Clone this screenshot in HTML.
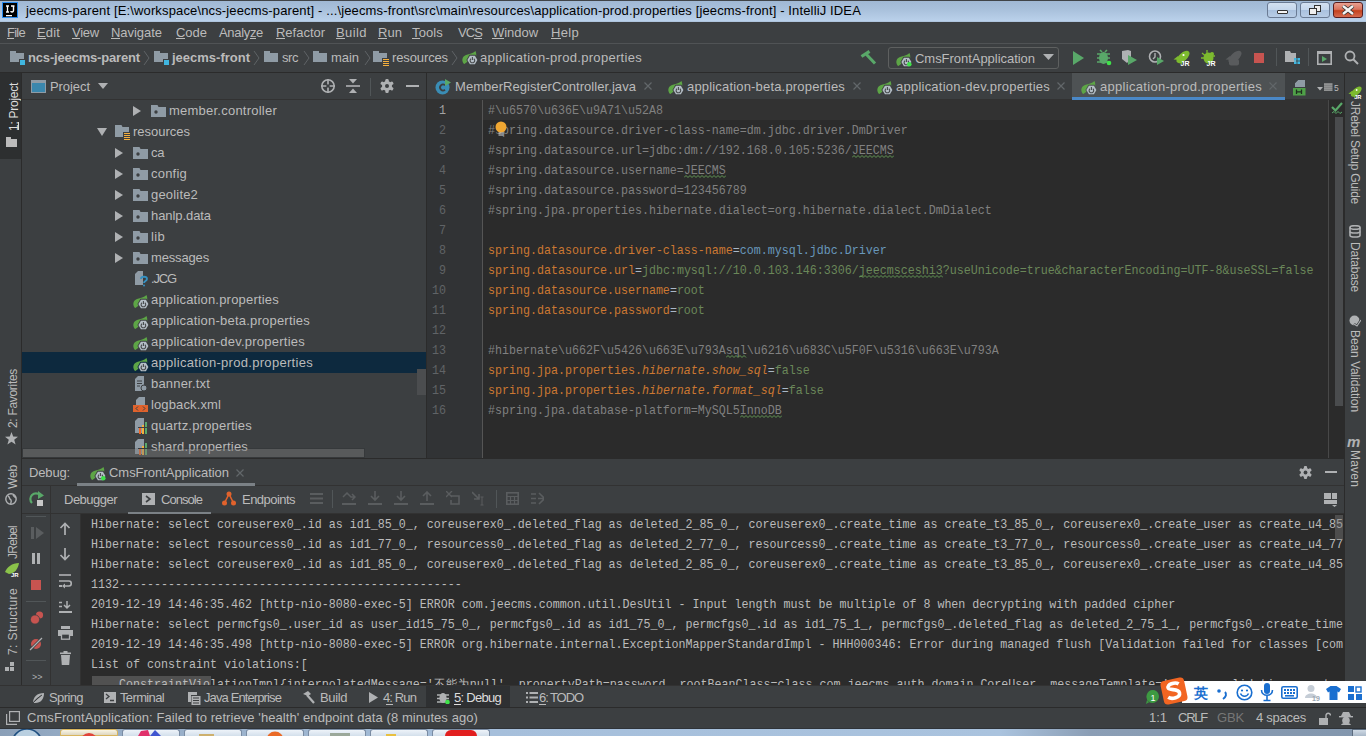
<!DOCTYPE html>
<html><head><meta charset="utf-8">
<style>
*{margin:0;padding:0;box-sizing:border-box}
html,body{width:1366px;height:736px;overflow:hidden;background:#3C3F41;font-family:"Liberation Sans",sans-serif;color:#BBBBBB}
body{position:relative}
.a{position:absolute}
.t{white-space:pre}
.m{position:absolute;transform:scaleY(1.07);transform-origin:0 0;font-family:"Liberation Mono",monospace;font-size:11.67px;line-height:20px;white-space:pre;color:#A9B7C6}
.vl{position:absolute;writing-mode:vertical-rl;white-space:pre;font-size:12px;line-height:14px;color:#BBBBBB}
</style></head><body>
<div class="a" style="left:0px;top:0px;width:1366px;height:22px;background:linear-gradient(#9fb7d3 0%,#a9c1dc 45%,#bcd3ec 100%);"></div>
<div class="a" style="left:0px;top:0px;width:1366px;height:1px;background:#404448;"></div>
<div class="a" style="left:0px;top:21px;width:1366px;height:1px;background:#aec4dd;"></div>
<svg class="a" style="left:2px;top:2px;" width="16" height="16" viewBox="0 0 16 16"><rect x="0.5" y="0.5" width="15" height="15" fill="#000" stroke="#2a8cf0" stroke-width="1"/><path d="M4 4 L7 4 M5.5 4 L5.5 10 M4 10 L7 10" stroke="#fff" stroke-width="1.3"/><path d="M9 4 L12.5 4 M11.5 4 L11.5 8.5 C11.5 10.5 9 10.5 8.8 9" stroke="#fff" stroke-width="1.4" fill="none"/><rect x="4" y="13" width="6" height="1.3" fill="#fff"/></svg>
<div class="a t" style="left:26px;top:0.50px;font-size:13px;line-height:20px;color:#000;font-weight:normal;letter-spacing:0.140px;">jeecms-parent [E:\workspace\ncs-jeecms-parent] - ...\jeecms-front\src\main\resources\application-prod.properties [jeecms-front] - IntelliJ IDEA</div>
<div class="a" style="left:1267px;top:2px;width:30px;height:16px;background:linear-gradient(#d3e1f1 0%,#c4d6ec 50%,#a9c1de 51%,#b8cde6 100%);border:1px solid #6a7b94;border-radius:3px"></div>
<div class="a" style="left:1277px;top:10px;width:11px;height:4px;background:#f4f4f4;border:1px solid #333;border-radius:1px"></div>
<div class="a" style="left:1300px;top:2px;width:30px;height:16px;background:linear-gradient(#d3e1f1 0%,#c4d6ec 50%,#a9c1de 51%,#b8cde6 100%);border:1px solid #6a7b94;border-radius:3px"></div>
<div class="a" style="left:1314px;top:5px;width:7px;height:7px;background:#eee;border:1px solid #333"></div>
<div class="a" style="left:1309px;top:8px;width:8px;height:7px;background:#eee;border:1px solid #333"></div>
<div class="a" style="left:1333px;top:2px;width:30px;height:16px;background:linear-gradient(#e8a091 0%,#d9745f 45%,#c4421e 55%,#d56b50 100%);border:1px solid #5a1e1e;border-radius:3px"></div>
<svg class="a" style="left:1341px;top:5px;" width="14" height="10" viewBox="0 0 14 10"><path d="M2 1 L12 9 M12 1 L2 9" stroke="#333" stroke-width="4"/><path d="M2 1 L12 9 M12 1 L2 9" stroke="#f4f4f4" stroke-width="2.4"/></svg>
<div class="a" style="left:0px;top:22px;width:1366px;height:21px;background:#3C3F41;"></div>
<div class="a t" style="left:7px;top:22.50px;font-size:13px;line-height:20px;color:#BBBBBB;font-weight:normal;letter-spacing:-0.737px;">File</div>
<div class="a" style="left:7px;top:38px;width:7px;height:1px;background:#BBBBBB;"></div>
<div class="a t" style="left:37px;top:22.50px;font-size:13px;line-height:20px;color:#BBBBBB;font-weight:normal;letter-spacing:0.150px;">Edit</div>
<div class="a" style="left:37px;top:38px;width:9px;height:1px;background:#BBBBBB;"></div>
<div class="a t" style="left:72px;top:22.50px;font-size:13px;line-height:20px;color:#BBBBBB;font-weight:normal;letter-spacing:-0.236px;">View</div>
<div class="a" style="left:72px;top:38px;width:8px;height:1px;background:#BBBBBB;"></div>
<div class="a t" style="left:111px;top:22.50px;font-size:13px;line-height:20px;color:#BBBBBB;font-weight:normal;letter-spacing:-0.039px;">Navigate</div>
<div class="a" style="left:111px;top:38px;width:9px;height:1px;background:#BBBBBB;"></div>
<div class="a t" style="left:176px;top:22.50px;font-size:13px;line-height:20px;color:#BBBBBB;font-weight:normal;letter-spacing:-0.020px;">Code</div>
<div class="a" style="left:176px;top:38px;width:9px;height:1px;background:#BBBBBB;"></div>
<div class="a t" style="left:219px;top:22.50px;font-size:13px;line-height:20px;color:#BBBBBB;font-weight:normal;letter-spacing:-0.322px;">Analyze</div>
<div class="a" style="left:250px;top:38px;width:6px;height:1px;background:#BBBBBB;"></div>
<div class="a t" style="left:276px;top:22.50px;font-size:13px;line-height:20px;color:#BBBBBB;font-weight:normal;letter-spacing:-0.016px;">Refactor</div>
<div class="a" style="left:276px;top:38px;width:9px;height:1px;background:#BBBBBB;"></div>
<div class="a t" style="left:336px;top:22.50px;font-size:13px;line-height:20px;color:#BBBBBB;font-weight:normal;letter-spacing:0.418px;">Build</div>
<div class="a" style="left:336px;top:38px;width:9px;height:1px;background:#BBBBBB;"></div>
<div class="a t" style="left:378px;top:22.50px;font-size:13px;line-height:20px;color:#BBBBBB;font-weight:normal;letter-spacing:0.050px;">Run</div>
<div class="a" style="left:378px;top:38px;width:9px;height:1px;background:#BBBBBB;"></div>
<div class="a t" style="left:412px;top:22.50px;font-size:13px;line-height:20px;color:#BBBBBB;font-weight:normal;letter-spacing:0.130px;">Tools</div>
<div class="a" style="left:412px;top:38px;width:8px;height:1px;background:#BBBBBB;"></div>
<div class="a t" style="left:458px;top:22.50px;font-size:13px;line-height:20px;color:#BBBBBB;font-weight:normal;letter-spacing:-0.910px;">VCS</div>
<div class="a" style="left:474px;top:38px;width:8px;height:1px;background:#BBBBBB;"></div>
<div class="a t" style="left:492px;top:22.50px;font-size:13px;line-height:20px;color:#BBBBBB;font-weight:normal;letter-spacing:-0.040px;">Window</div>
<div class="a" style="left:492px;top:38px;width:12px;height:1px;background:#BBBBBB;"></div>
<div class="a t" style="left:551px;top:22.50px;font-size:13px;line-height:20px;color:#BBBBBB;font-weight:normal;letter-spacing:0.316px;">Help</div>
<div class="a" style="left:551px;top:38px;width:10px;height:1px;background:#BBBBBB;"></div>
<div class="a" style="left:0px;top:43px;width:1366px;height:1px;background:#505355;"></div>
<div class="a" style="left:0px;top:44px;width:1366px;height:28px;background:#3C3F41;"></div>
<div class="a" style="left:10px;top:53px;width:14px;height:9px;background:#8F9BA5;"></div>
<div class="a" style="left:10px;top:51px;width:6px;height:3px;background:#8F9BA5;"></div>
<div class="a" style="left:19px;top:59px;width:7px;height:7px;background:#40B6E0;border:1px solid #3C3F41"></div>
<div class="a t" style="left:28px;top:47.50px;font-size:13px;line-height:20px;color:#BBBBBB;font-weight:bold;letter-spacing:-0.170px;">ncs-jeecms-parent</div>
<svg class="a" style="left:143px;top:50px;" width="7" height="16" viewBox="0 0 7 16"><path d="M1 1 L6 8 L1 15" stroke="#5f6366" fill="none" stroke-width="1"/></svg>
<div class="a" style="left:154px;top:53px;width:14px;height:9px;background:#8F9BA5;"></div>
<div class="a" style="left:154px;top:51px;width:6px;height:3px;background:#8F9BA5;"></div>
<div class="a" style="left:163px;top:59px;width:7px;height:7px;background:#40B6E0;border:1px solid #3C3F41"></div>
<div class="a t" style="left:172px;top:47.50px;font-size:13px;line-height:20px;color:#BBBBBB;font-weight:bold;letter-spacing:-0.002px;">jeecms-front</div>
<svg class="a" style="left:253px;top:50px;" width="7" height="16" viewBox="0 0 7 16"><path d="M1 1 L6 8 L1 15" stroke="#5f6366" fill="none" stroke-width="1"/></svg>
<div class="a" style="left:264px;top:53px;width:14px;height:9px;background:#8F9BA5;"></div>
<div class="a" style="left:264px;top:51px;width:6px;height:3px;background:#8F9BA5;"></div>
<div class="a t" style="left:282px;top:47.50px;font-size:13px;line-height:20px;color:#BBBBBB;font-weight:normal;letter-spacing:-0.443px;">src</div>
<svg class="a" style="left:303px;top:50px;" width="7" height="16" viewBox="0 0 7 16"><path d="M1 1 L6 8 L1 15" stroke="#5f6366" fill="none" stroke-width="1"/></svg>
<div class="a" style="left:313px;top:53px;width:14px;height:9px;background:#8F9BA5;"></div>
<div class="a" style="left:313px;top:51px;width:6px;height:3px;background:#8F9BA5;"></div>
<div class="a t" style="left:331px;top:47.50px;font-size:13px;line-height:20px;color:#BBBBBB;font-weight:normal;letter-spacing:-0.045px;">main</div>
<svg class="a" style="left:364px;top:50px;" width="7" height="16" viewBox="0 0 7 16"><path d="M1 1 L6 8 L1 15" stroke="#5f6366" fill="none" stroke-width="1"/></svg>
<div class="a" style="left:373px;top:53px;width:14px;height:9px;background:#8F9BA5;"></div>
<div class="a" style="left:373px;top:51px;width:6px;height:3px;background:#8F9BA5;"></div>
<div class="a" style="left:382px;top:58px;width:7px;height:8px;background:#3C3F41;"></div>
<div class="a" style="left:383px;top:59px;width:6px;height:1px;background:#F4AF3D;"></div>
<div class="a" style="left:383px;top:61px;width:6px;height:1px;background:#F4AF3D;"></div>
<div class="a" style="left:383px;top:63px;width:6px;height:1px;background:#F4AF3D;"></div>
<div class="a" style="left:383px;top:65px;width:6px;height:1px;background:#F4AF3D;"></div>
<div class="a t" style="left:392px;top:47.50px;font-size:13px;line-height:20px;color:#BBBBBB;font-weight:normal;letter-spacing:-0.120px;">resources</div>
<svg class="a" style="left:451px;top:50px;" width="7" height="16" viewBox="0 0 7 16"><path d="M1 1 L6 8 L1 15" stroke="#5f6366" fill="none" stroke-width="1"/></svg>
<svg class="a" style="left:461px;top:48px;" width="18" height="18" viewBox="0 0 18 18"><path d="M2.5 15.5 C0.5 12.5 1 8.5 5 7 C8.5 5.8 12 5.5 14.5 3 C15.8 6 15.5 9.5 13.5 11.5 L9 12.5 C7 13.2 5 14.5 3.5 16 Z" fill="#5DA546"/><polygon points="17.40,12.00 14.40,17.20 8.40,17.20 5.40,12.00 8.40,6.80 14.40,6.80" fill="#3C3F41"/><polygon points="16.40,12.00 13.90,16.33 8.90,16.33 6.40,12.00 8.90,7.67 13.90,7.67" fill="#B4BEC6"/><path d="M10.0 10.7 A2.3 2.3 0 1 0 12.8 10.7" stroke="#46494B" stroke-width="1.1" fill="none"/><path d="M11.4 9.0 L11.4 12.0" stroke="#46494B" stroke-width="1.1"/></svg>
<div class="a t" style="left:480px;top:47.50px;font-size:13px;line-height:20px;color:#BBBBBB;font-weight:normal;letter-spacing:0.299px;">application-prod.properties</div>
<svg class="a" style="left:860px;top:49px;" width="17" height="17" viewBox="0 0 17 17"><path d="M1.5 7.5 L9.5 2.3" stroke="#59A869" stroke-width="3.2"/><path d="M6.5 5.5 L15 14.5" stroke="#59A869" stroke-width="3"/></svg>
<div class="a" style="left:888px;top:47px;width:171px;height:22px;background:transparent;border:1px solid #5E6060;border-radius:3px"></div>
<svg class="a" style="left:895px;top:50px;" width="18" height="18" viewBox="0 0 18 18"><path d="M2.5 15.5 C0.5 12.5 1 8.5 5 7 C8.5 5.8 12 5.5 14.5 3 C15.8 6 15.5 9.5 13.5 11.5 L9 12.5 C7 13.2 5 14.5 3.5 16 Z" fill="#5DA546"/><polygon points="17.40,12.00 14.40,17.20 8.40,17.20 5.40,12.00 8.40,6.80 14.40,6.80" fill="#3C3F41"/><polygon points="16.40,12.00 13.90,16.33 8.90,16.33 6.40,12.00 8.90,7.67 13.90,7.67" fill="#B4BEC6"/><path d="M10.0 10.7 A2.3 2.3 0 1 0 12.8 10.7" stroke="#46494B" stroke-width="1.1" fill="none"/><path d="M11.4 9.0 L11.4 12.0" stroke="#46494B" stroke-width="1.1"/><circle cx="14.3" cy="14.3" r="2.3" fill="#3fe24a"/></svg>
<div class="a t" style="left:915px;top:48.50px;font-size:13px;line-height:20px;color:#BBBBBB;font-weight:normal;letter-spacing:-0.035px;">CmsFrontApplication</div>
<svg class="a" style="left:1043px;top:54px;" width="11" height="7" viewBox="0 0 11 7"><polygon points="0,0 11,0 5.5,6" fill="#AFB1B3"/></svg>
<svg class="a" style="left:1072px;top:51px;" width="12" height="14" viewBox="0 0 12 14"><polygon points="1,0 12,7 1,14" fill="#59A869"/></svg>
<svg class="a" style="left:1096px;top:49px;" width="16" height="17" viewBox="0 0 16 17"><ellipse cx="7.5" cy="9" rx="4.5" ry="6" fill="#59A869"/><path d="M1 5 L14 5 M1 9 L14 9 M1 13 L14 13 M4 1 L6 3 M11 1 L9 3" stroke="#59A869" stroke-width="1.6"/><circle cx="13" cy="14" r="2.3" fill="#3fe24a"/></svg>
<svg class="a" style="left:1121px;top:49px;" width="17" height="17" viewBox="0 0 17 17"><path d="M1 2 L7 1 L10 2 L10 10 L6 14 L1 10 Z" fill="#AFB1B3"/><polygon points="7,6 16,11 7,16" fill="#59A869"/></svg>
<svg class="a" style="left:1148px;top:49px;" width="17" height="17" viewBox="0 0 17 17"><circle cx="7" cy="7.5" r="5.5" fill="none" stroke="#AFB1B3" stroke-width="1.6"/><path d="M7 4 L7 8 L5 10" stroke="#AFB1B3" stroke-width="1.4" fill="none"/><polygon points="9,8 16,12 9,16" fill="#59A869"/></svg>
<svg class="a" style="left:1173px;top:49px;" width="17" height="18" viewBox="0 0 17 18"><ellipse cx="10" cy="8" rx="8" ry="4" transform="rotate(-42 10 8)" fill="#7DBB2F"/><path d="M0.5 10.5 L5 7 L7 11 Z" fill="#7DBB2F"/><path d="M6 11 L8 16 L10.5 12 Z" fill="#7DBB2F"/><circle cx="10.5" cy="6" r="1.1" fill="#fff"/><text x="7.5" y="17" font-size="7" font-family="Liberation Sans" font-weight="bold" fill="#fff">JR</text></svg>
<svg class="a" style="left:1199px;top:49px;" width="18" height="18" viewBox="0 0 18 18"><path d="M2 9 L6 9 M3 4 L6.5 7 M8 1 L8 5 M12 7 L16 7" stroke="#7DBB2F" stroke-width="1.3"/><ellipse cx="9.5" cy="9" rx="5" ry="5.5" fill="#7DBB2F"/><circle cx="13" cy="5" r="2" fill="#7DBB2F"/><text x="7.5" y="17" font-size="7" font-family="Liberation Sans" font-weight="bold" fill="#fff">JR</text></svg>
<svg class="a" style="left:1225px;top:49px;" width="17" height="17" viewBox="0 0 17 17"><ellipse cx="10" cy="8" rx="8" ry="4" transform="rotate(-42 10 8)" fill="#595B5D"/><path d="M0.5 10.5 L5 7 L7 11 Z" fill="#595B5D"/><path d="M6 11 L8 16 L10.5 12 Z" fill="#595B5D"/><rect x="4" y="10" width="10" height="6.5" rx="2" fill="#595B5D"/></svg>
<div class="a" style="left:1254px;top:53px;width:10px;height:10px;background:#C75450;"></div>
<div class="a" style="left:1276px;top:48px;width:1px;height:18px;background:#515658;"></div>
<svg class="a" style="left:1284px;top:49px;" width="16" height="16" viewBox="0 0 16 16"><path d="M1 2 L6 2 L7 4 L12 4 L12 13 L1 13 Z" fill="#AFB1B3"/><rect x="10" y="9" width="2.6" height="2.6" fill="#40B6E0"/><rect x="13.4" y="9" width="2.6" height="2.6" fill="#40B6E0"/><rect x="10" y="12.4" width="2.6" height="2.6" fill="#40B6E0"/><rect x="13.4" y="12.4" width="2.6" height="2.6" fill="#40B6E0"/></svg>
<div class="a" style="left:1308px;top:48px;width:1px;height:18px;background:#515658;"></div>
<svg class="a" style="left:1317px;top:51px;" width="15" height="14" viewBox="0 0 15 14"><rect x="0.8" y="0.8" width="13.4" height="12.4" fill="none" stroke="#AFB1B3" stroke-width="1.6"/><rect x="1" y="1" width="13" height="2" fill="#AFB1B3"/><polygon points="5,5 10,8 5,11" fill="#59A869"/></svg>
<svg class="a" style="left:1344px;top:50px;" width="15" height="15" viewBox="0 0 15 15"><circle cx="6" cy="6" r="4.5" fill="none" stroke="#AFB1B3" stroke-width="1.8"/><path d="M9 9 L14 14" stroke="#AFB1B3" stroke-width="2"/></svg>
<div class="a" style="left:0px;top:72px;width:1366px;height:1px;background:#2B2B2B;"></div>
<div class="a" style="left:0px;top:73px;width:21px;height:612px;background:#3C3F41;"></div>
<div class="a" style="left:21px;top:73px;width:1px;height:612px;background:#2B2B2B;"></div>
<div class="a" style="left:0px;top:73px;width:21px;height:86px;background:#2D2F30;"></div>
<div class="vl" style="left:7px;top:83px;height:52px;font-size:12px;letter-spacing:-0.269px;color:#DDDDDD;transform:rotate(180deg);transform-origin:7px 24.0px">1: Project</div>
<div class="a" style="left:18px;top:122px;width:1px;height:8px;background:#DDDDDD;"></div>
<div class="a" style="left:6px;top:139px;width:11px;height:8px;background:#BBBBBB;"></div>
<div class="a" style="left:6px;top:137px;width:5px;height:3px;background:#BBBBBB;"></div>
<div class="vl" style="left:6px;top:369px;height:63px;font-size:12px;letter-spacing:-0.308px;color:#BBBBBB;transform:rotate(180deg);transform-origin:7px 29.5px">2: Favorites</div>
<svg class="a" style="left:5px;top:432px;" width="13" height="13" viewBox="0 0 13 13"><polygon points="6.5,0 8.2,4.6 13,4.8 9.2,7.8 10.6,12.6 6.5,9.8 2.4,12.6 3.8,7.8 0,4.8 4.8,4.6" fill="#AFB1B3"/></svg>
<div class="vl" style="left:6px;top:465px;height:28px;font-size:12px;letter-spacing:-0.152px;color:#BBBBBB;transform:rotate(180deg);transform-origin:7px 12.0px">Web</div>
<svg class="a" style="left:5px;top:493px;" width="12" height="12" viewBox="0 0 12 12"><circle cx="6" cy="6" r="5.2" fill="none" stroke="#AFB1B3" stroke-width="1.4"/><path d="M3 3 C5 4 4 6 6 7 C7 9 5 10 6 11 M8 2 C9 4 10 4 11 5" stroke="#AFB1B3" stroke-width="1.4" fill="none"/></svg>
<div class="vl" style="left:6px;top:526px;height:37px;font-size:12px;letter-spacing:-0.726px;color:#BBBBBB;transform:rotate(180deg);transform-origin:7px 16.5px">JRebel</div>
<svg class="a" style="left:4px;top:562px;" width="16" height="15" viewBox="0 0 16 15"><path d="M1 10 C3 5 8 1 15 1 C14 7 11 11 5 12 Z" fill="#8BC34A"/><text x="7" y="15" font-size="6" font-family="Liberation Sans" font-weight="bold" fill="#fff">JR</text></svg>
<div class="vl" style="left:6px;top:588px;height:71px;font-size:12px;letter-spacing:0.414px;color:#BBBBBB;transform:rotate(180deg);transform-origin:7px 33.5px">7: Structure</div>
<div class="a" style="left:5px;top:667px;width:4px;height:4px;background:#AFB1B3;"></div>
<div class="a" style="left:10px;top:667px;width:4px;height:4px;background:#AFB1B3;"></div>
<div class="a" style="left:10px;top:662px;width:4px;height:4px;background:#AFB1B3;"></div>
<div class="a" style="left:22px;top:73px;width:404px;height:26px;background:#3C3F41;"></div>
<div class="a" style="left:31px;top:80px;width:15px;height:13px;background:#3A87AD;border:1.5px solid #8F9BA5;border-top-width:3px"></div>
<div class="a t" style="left:50px;top:76.50px;font-size:13px;line-height:20px;color:#BBBBBB;font-weight:normal;letter-spacing:-0.066px;">Project</div>
<svg class="a" style="left:98px;top:83px;" width="10" height="6" viewBox="0 0 10 6"><polygon points="0,0 10,0 5,6" fill="#AFB1B3"/></svg>
<svg class="a" style="left:320px;top:78px;" width="16" height="16" viewBox="0 0 16 16"><circle cx="8" cy="8" r="6.2" fill="none" stroke="#AFB1B3" stroke-width="1.6"/><path d="M8 1 L8 15 M1 8 L15 8" stroke="#AFB1B3" stroke-width="1.6"/><circle cx="8" cy="8" r="1.8" fill="#3C3F41"/></svg>
<svg class="a" style="left:346px;top:79px;" width="14" height="14" viewBox="0 0 14 14"><path d="M0 7 L14 7" stroke="#AFB1B3" stroke-width="1.6"/><polygon points="3,0 11,0 7,4.5" fill="#AFB1B3"/><polygon points="3,14 11,14 7,9.5" fill="#AFB1B3"/></svg>
<div class="a" style="left:370px;top:78px;width:1px;height:18px;background:#515658;"></div>
<svg class="a" style="left:380px;top:79px;" width="14" height="14" viewBox="0 0 14 14"><g fill="#AFB1B3"><circle cx="7" cy="7" r="5"/><g id="t"><rect x="5.3" y="0" width="3.4" height="14" rx="1.2"/></g><rect x="5.3" y="0" width="3.4" height="14" rx="1.2" transform="rotate(60 7 7)"/><rect x="5.3" y="0" width="3.4" height="14" rx="1.2" transform="rotate(-60 7 7)"/></g><circle cx="7" cy="7" r="2" fill="#3C3F41"/></svg>
<div class="a" style="left:406px;top:85px;width:13px;height:2px;background:#AFB1B3;"></div>
<div class="a" style="left:22px;top:99px;width:404px;height:1px;background:#323232;"></div>
<div class="a" style="left:22px;top:352px;width:404px;height:21px;background:#0D293E;"></div>
<svg class="a" style="left:133px;top:106px;" width="9" height="10" viewBox="0 0 9 10"><polygon points="0,0 8,5 0,10" fill="#AFB1B3"/></svg>
<svg class="a" style="left:151px;top:105px;" width="15" height="12" viewBox="0 0 15 12"><path d="M0 0 L6.5 0 L7.5 2 L15 2 L15 12 L0 12 Z" fill="#8F9BA5"/><circle cx="5" cy="7" r="1.7" fill="#3C3F41"/></svg>
<div class="a t" style="left:169px;top:100.50px;font-size:13px;line-height:20px;color:#BBBBBB;font-weight:normal;letter-spacing:0.233px;">member.controller</div>
<svg class="a" style="left:97px;top:128px;" width="10" height="9" viewBox="0 0 10 9"><polygon points="0,0 10,0 5,8" fill="#AFB1B3"/></svg>
<svg class="a" style="left:115px;top:125px;" width="16" height="15" viewBox="0 0 16 15"><path d="M0 0 L6.5 0 L7.5 2 L14 2 L14 12 L0 12 Z" fill="#8F9BA5"/><rect x="8" y="7" width="8" height="8" fill="#3C3F41"/><g fill="#F4AF3D"><rect x="9" y="8" width="6" height="1"/><rect x="9" y="10" width="6" height="1"/><rect x="9" y="12" width="6" height="1"/><rect x="9" y="14" width="6" height="1"/></g></svg>
<div class="a t" style="left:133px;top:121.50px;font-size:13px;line-height:20px;color:#BBBBBB;font-weight:normal;letter-spacing:-0.009px;">resources</div>
<svg class="a" style="left:115px;top:148px;" width="9" height="10" viewBox="0 0 9 10"><polygon points="0,0 8,5 0,10" fill="#AFB1B3"/></svg>
<svg class="a" style="left:133px;top:147px;" width="15" height="12" viewBox="0 0 15 12"><path d="M0 0 L6.5 0 L7.5 2 L15 2 L15 12 L0 12 Z" fill="#8F9BA5"/><circle cx="5" cy="7" r="1.7" fill="#3C3F41"/></svg>
<div class="a t" style="left:151px;top:142.50px;font-size:13px;line-height:20px;color:#BBBBBB;font-weight:normal;letter-spacing:-0.365px;">ca</div>
<svg class="a" style="left:115px;top:169px;" width="9" height="10" viewBox="0 0 9 10"><polygon points="0,0 8,5 0,10" fill="#AFB1B3"/></svg>
<svg class="a" style="left:133px;top:168px;" width="15" height="12" viewBox="0 0 15 12"><path d="M0 0 L6.5 0 L7.5 2 L15 2 L15 12 L0 12 Z" fill="#8F9BA5"/><circle cx="5" cy="7" r="1.7" fill="#3C3F41"/></svg>
<div class="a t" style="left:151px;top:163.50px;font-size:13px;line-height:20px;color:#BBBBBB;font-weight:normal;letter-spacing:0.218px;">config</div>
<svg class="a" style="left:115px;top:190px;" width="9" height="10" viewBox="0 0 9 10"><polygon points="0,0 8,5 0,10" fill="#AFB1B3"/></svg>
<svg class="a" style="left:133px;top:189px;" width="15" height="12" viewBox="0 0 15 12"><path d="M0 0 L6.5 0 L7.5 2 L15 2 L15 12 L0 12 Z" fill="#8F9BA5"/><circle cx="5" cy="7" r="1.7" fill="#3C3F41"/></svg>
<div class="a t" style="left:151px;top:184.50px;font-size:13px;line-height:20px;color:#BBBBBB;font-weight:normal;letter-spacing:0.183px;">geolite2</div>
<svg class="a" style="left:115px;top:211px;" width="9" height="10" viewBox="0 0 9 10"><polygon points="0,0 8,5 0,10" fill="#AFB1B3"/></svg>
<svg class="a" style="left:133px;top:210px;" width="15" height="12" viewBox="0 0 15 12"><path d="M0 0 L6.5 0 L7.5 2 L15 2 L15 12 L0 12 Z" fill="#8F9BA5"/><circle cx="5" cy="7" r="1.7" fill="#3C3F41"/></svg>
<div class="a t" style="left:151px;top:205.50px;font-size:13px;line-height:20px;color:#BBBBBB;font-weight:normal;letter-spacing:-0.072px;">hanlp.data</div>
<svg class="a" style="left:115px;top:232px;" width="9" height="10" viewBox="0 0 9 10"><polygon points="0,0 8,5 0,10" fill="#AFB1B3"/></svg>
<svg class="a" style="left:133px;top:231px;" width="15" height="12" viewBox="0 0 15 12"><path d="M0 0 L6.5 0 L7.5 2 L15 2 L15 12 L0 12 Z" fill="#8F9BA5"/><circle cx="5" cy="7" r="1.7" fill="#3C3F41"/></svg>
<div class="a t" style="left:151px;top:226.50px;font-size:13px;line-height:20px;color:#BBBBBB;font-weight:normal;letter-spacing:0.331px;">lib</div>
<svg class="a" style="left:115px;top:253px;" width="9" height="10" viewBox="0 0 9 10"><polygon points="0,0 8,5 0,10" fill="#AFB1B3"/></svg>
<svg class="a" style="left:133px;top:252px;" width="15" height="12" viewBox="0 0 15 12"><path d="M0 0 L6.5 0 L7.5 2 L15 2 L15 12 L0 12 Z" fill="#8F9BA5"/><circle cx="5" cy="7" r="1.7" fill="#3C3F41"/></svg>
<div class="a t" style="left:151px;top:247.50px;font-size:13px;line-height:20px;color:#BBBBBB;font-weight:normal;letter-spacing:-0.156px;">messages</div>
<svg class="a" style="left:134px;top:271px;" width="15" height="16" viewBox="0 0 15 16"><path d="M1 3 L4 0 L9 0 L9 14 L1 14 Z" fill="#8F9BA5"/><path d="M7 8 C7 5 13 5 13 8 C13 10 10 10 10 12" stroke="#3592C4" stroke-width="1.8" fill="none"/><circle cx="10" cy="14.6" r="1" fill="#3592C4"/></svg>
<div class="a t" style="left:151px;top:268.50px;font-size:13px;line-height:20px;color:#BBBBBB;font-weight:normal;letter-spacing:-1.153px;">.JCG</div>
<svg class="a" style="left:132px;top:292px;" width="18" height="18" viewBox="0 0 18 18"><path d="M2.5 15.5 C0.5 12.5 1 8.5 5 7 C8.5 5.8 12 5.5 14.5 3 C15.8 6 15.5 9.5 13.5 11.5 L9 12.5 C7 13.2 5 14.5 3.5 16 Z" fill="#5DA546"/><polygon points="17.40,12.00 14.40,17.20 8.40,17.20 5.40,12.00 8.40,6.80 14.40,6.80" fill="#3C3F41"/><polygon points="16.40,12.00 13.90,16.33 8.90,16.33 6.40,12.00 8.90,7.67 13.90,7.67" fill="#B4BEC6"/><path d="M10.0 10.7 A2.3 2.3 0 1 0 12.8 10.7" stroke="#46494B" stroke-width="1.1" fill="none"/><path d="M11.4 9.0 L11.4 12.0" stroke="#46494B" stroke-width="1.1"/></svg>
<div class="a t" style="left:151px;top:289.50px;font-size:13px;line-height:20px;color:#BBBBBB;font-weight:normal;letter-spacing:0.201px;">application.properties</div>
<svg class="a" style="left:132px;top:313px;" width="18" height="18" viewBox="0 0 18 18"><path d="M2.5 15.5 C0.5 12.5 1 8.5 5 7 C8.5 5.8 12 5.5 14.5 3 C15.8 6 15.5 9.5 13.5 11.5 L9 12.5 C7 13.2 5 14.5 3.5 16 Z" fill="#5DA546"/><polygon points="17.40,12.00 14.40,17.20 8.40,17.20 5.40,12.00 8.40,6.80 14.40,6.80" fill="#3C3F41"/><polygon points="16.40,12.00 13.90,16.33 8.90,16.33 6.40,12.00 8.90,7.67 13.90,7.67" fill="#B4BEC6"/><path d="M10.0 10.7 A2.3 2.3 0 1 0 12.8 10.7" stroke="#46494B" stroke-width="1.1" fill="none"/><path d="M11.4 9.0 L11.4 12.0" stroke="#46494B" stroke-width="1.1"/></svg>
<div class="a t" style="left:151px;top:310.50px;font-size:13px;line-height:20px;color:#BBBBBB;font-weight:normal;letter-spacing:0.214px;">application-beta.properties</div>
<svg class="a" style="left:132px;top:334px;" width="18" height="18" viewBox="0 0 18 18"><path d="M2.5 15.5 C0.5 12.5 1 8.5 5 7 C8.5 5.8 12 5.5 14.5 3 C15.8 6 15.5 9.5 13.5 11.5 L9 12.5 C7 13.2 5 14.5 3.5 16 Z" fill="#5DA546"/><polygon points="17.40,12.00 14.40,17.20 8.40,17.20 5.40,12.00 8.40,6.80 14.40,6.80" fill="#3C3F41"/><polygon points="16.40,12.00 13.90,16.33 8.90,16.33 6.40,12.00 8.90,7.67 13.90,7.67" fill="#B4BEC6"/><path d="M10.0 10.7 A2.3 2.3 0 1 0 12.8 10.7" stroke="#46494B" stroke-width="1.1" fill="none"/><path d="M11.4 9.0 L11.4 12.0" stroke="#46494B" stroke-width="1.1"/></svg>
<div class="a t" style="left:151px;top:331.50px;font-size:13px;line-height:20px;color:#BBBBBB;font-weight:normal;letter-spacing:0.234px;">application-dev.properties</div>
<svg class="a" style="left:132px;top:355px;" width="18" height="18" viewBox="0 0 18 18"><path d="M2.5 15.5 C0.5 12.5 1 8.5 5 7 C8.5 5.8 12 5.5 14.5 3 C15.8 6 15.5 9.5 13.5 11.5 L9 12.5 C7 13.2 5 14.5 3.5 16 Z" fill="#5DA546"/><polygon points="17.40,12.00 14.40,17.20 8.40,17.20 5.40,12.00 8.40,6.80 14.40,6.80" fill="#0D293E"/><polygon points="16.40,12.00 13.90,16.33 8.90,16.33 6.40,12.00 8.90,7.67 13.90,7.67" fill="#B4BEC6"/><path d="M10.0 10.7 A2.3 2.3 0 1 0 12.8 10.7" stroke="#46494B" stroke-width="1.1" fill="none"/><path d="M11.4 9.0 L11.4 12.0" stroke="#46494B" stroke-width="1.1"/></svg>
<div class="a t" style="left:151px;top:352.50px;font-size:13px;line-height:20px;color:#BBBBBB;font-weight:normal;letter-spacing:0.299px;">application-prod.properties</div>
<svg class="a" style="left:134px;top:376px;" width="15" height="16" viewBox="0 0 15 16"><path d="M1 3 L4 0 L10 0 L10 15 L1 15 Z" fill="#8F9BA5"/><g stroke="#3C3F41" stroke-width="1"><path d="M3 5 L8 5 M3 7.5 L8 7.5 M3 10 L6 10"/></g><circle cx="10" cy="12" r="3" fill="#8F9BA5" stroke="#3C3F41"/></svg>
<div class="a t" style="left:151px;top:373.50px;font-size:13px;line-height:20px;color:#BBBBBB;font-weight:normal;letter-spacing:0.190px;">banner.txt</div>
<svg class="a" style="left:133px;top:397px;" width="16" height="16" viewBox="0 0 16 16"><path d="M3 3 L6 0 L12 0 L12 8 L3 8 Z" fill="#8F9BA5"/><rect x="0" y="8" width="15" height="7" fill="#E0622C"/><path d="M5 9.5 L3 11.5 L5 13.5 M10 9.5 L12 11.5 L10 13.5" stroke="#3C3F41" stroke-width="1" fill="none"/></svg>
<div class="a t" style="left:151px;top:394.50px;font-size:13px;line-height:20px;color:#BBBBBB;font-weight:normal;letter-spacing:0.124px;">logback.xml</div>
<svg class="a" style="left:134px;top:418px;" width="15" height="16" viewBox="0 0 15 16"><path d="M1 3 L4 0 L10 0 L10 15 L1 15 Z" fill="#8F9BA5"/><rect x="5" y="10" width="2" height="6" fill="#F26522"/><rect x="8" y="7" width="2" height="9" fill="#F4AF3D"/><rect x="11" y="4" width="2" height="12" fill="#59A869"/><rect x="4" y="9" width="10" height="1" fill="#3C3F41"/></svg>
<div class="a t" style="left:151px;top:415.50px;font-size:13px;line-height:20px;color:#BBBBBB;font-weight:normal;letter-spacing:0.203px;">quartz.properties</div>
<svg class="a" style="left:134px;top:439px;" width="15" height="16" viewBox="0 0 15 16"><path d="M1 3 L4 0 L10 0 L10 15 L1 15 Z" fill="#8F9BA5"/><rect x="5" y="10" width="2" height="6" fill="#F26522"/><rect x="8" y="7" width="2" height="9" fill="#F4AF3D"/><rect x="11" y="4" width="2" height="12" fill="#59A869"/><rect x="4" y="9" width="10" height="1" fill="#3C3F41"/></svg>
<div class="a t" style="left:151px;top:436.50px;font-size:13px;line-height:20px;color:#BBBBBB;font-weight:normal;letter-spacing:0.191px;">shard.properties</div>
<div class="a" style="left:417px;top:369px;width:9px;height:26px;background:#4B4D4F;"></div>
<div class="a" style="left:22px;top:448px;width:343px;height:10px;background:rgba(20,20,20,0.12);"></div>
<div class="a" style="left:23px;top:449px;width:341px;height:8px;background:rgba(150,150,150,0.36);"></div>
<div class="a" style="left:426px;top:73px;width:1px;height:386px;background:#2B2B2B;"></div>
<div class="a" style="left:427px;top:73px;width:917px;height:26px;background:#3C3F41;"></div>
<div class="a" style="left:427px;top:99px;width:917px;height:1px;background:#323232;"></div>
<svg class="a" style="left:435px;top:79px;" width="17" height="16" viewBox="0 0 17 16"><circle cx="7.5" cy="8.5" r="7" fill="#3A8DB5"/><path d="M10 6.2 A3 3 0 1 0 10 10.8" stroke="#3C3F41" stroke-width="1.8" fill="none"/><polygon points="10,0 16,3.5 10,7" fill="#59A869"/></svg>
<div class="a t" style="left:455px;top:76.50px;font-size:13px;line-height:20px;color:#BBBBBB;font-weight:normal;letter-spacing:0.062px;">MemberRegisterController.java</div>
<svg class="a" style="left:644px;top:82px;" width="8" height="8" viewBox="0 0 8 8"><path d="M0.5 0.5 L7.5 7.5 M7.5 0.5 L0.5 7.5" stroke="#62676A" stroke-width="1.2"/></svg>
<svg class="a" style="left:667px;top:78px;" width="18" height="18" viewBox="0 0 18 18"><path d="M2.5 15.5 C0.5 12.5 1 8.5 5 7 C8.5 5.8 12 5.5 14.5 3 C15.8 6 15.5 9.5 13.5 11.5 L9 12.5 C7 13.2 5 14.5 3.5 16 Z" fill="#5DA546"/><polygon points="17.40,12.00 14.40,17.20 8.40,17.20 5.40,12.00 8.40,6.80 14.40,6.80" fill="#3C3F41"/><polygon points="16.40,12.00 13.90,16.33 8.90,16.33 6.40,12.00 8.90,7.67 13.90,7.67" fill="#B4BEC6"/><path d="M10.0 10.7 A2.3 2.3 0 1 0 12.8 10.7" stroke="#46494B" stroke-width="1.1" fill="none"/><path d="M11.4 9.0 L11.4 12.0" stroke="#46494B" stroke-width="1.1"/></svg>
<div class="a t" style="left:687px;top:76.50px;font-size:13px;line-height:20px;color:#BBBBBB;font-weight:normal;letter-spacing:0.177px;">application-beta.properties</div>
<svg class="a" style="left:853px;top:82px;" width="8" height="8" viewBox="0 0 8 8"><path d="M0.5 0.5 L7.5 7.5 M7.5 0.5 L0.5 7.5" stroke="#62676A" stroke-width="1.2"/></svg>
<svg class="a" style="left:876px;top:78px;" width="18" height="18" viewBox="0 0 18 18"><path d="M2.5 15.5 C0.5 12.5 1 8.5 5 7 C8.5 5.8 12 5.5 14.5 3 C15.8 6 15.5 9.5 13.5 11.5 L9 12.5 C7 13.2 5 14.5 3.5 16 Z" fill="#5DA546"/><polygon points="17.40,12.00 14.40,17.20 8.40,17.20 5.40,12.00 8.40,6.80 14.40,6.80" fill="#3C3F41"/><polygon points="16.40,12.00 13.90,16.33 8.90,16.33 6.40,12.00 8.90,7.67 13.90,7.67" fill="#B4BEC6"/><path d="M10.0 10.7 A2.3 2.3 0 1 0 12.8 10.7" stroke="#46494B" stroke-width="1.1" fill="none"/><path d="M11.4 9.0 L11.4 12.0" stroke="#46494B" stroke-width="1.1"/></svg>
<div class="a t" style="left:896px;top:76.50px;font-size:13px;line-height:20px;color:#BBBBBB;font-weight:normal;letter-spacing:0.234px;">application-dev.properties</div>
<svg class="a" style="left:1057px;top:82px;" width="8" height="8" viewBox="0 0 8 8"><path d="M0.5 0.5 L7.5 7.5 M7.5 0.5 L0.5 7.5" stroke="#62676A" stroke-width="1.2"/></svg>
<div class="a" style="left:1072px;top:73px;width:213px;height:24px;background:#4E5254;"></div>
<div class="a" style="left:1072px;top:97px;width:213px;height:3px;background:#4A88C7;"></div>
<svg class="a" style="left:1080px;top:78px;" width="18" height="18" viewBox="0 0 18 18"><path d="M2.5 15.5 C0.5 12.5 1 8.5 5 7 C8.5 5.8 12 5.5 14.5 3 C15.8 6 15.5 9.5 13.5 11.5 L9 12.5 C7 13.2 5 14.5 3.5 16 Z" fill="#5DA546"/><polygon points="17.40,12.00 14.40,17.20 8.40,17.20 5.40,12.00 8.40,6.80 14.40,6.80" fill="#4E5254"/><polygon points="16.40,12.00 13.90,16.33 8.90,16.33 6.40,12.00 8.90,7.67 13.90,7.67" fill="#B4BEC6"/><path d="M10.0 10.7 A2.3 2.3 0 1 0 12.8 10.7" stroke="#46494B" stroke-width="1.1" fill="none"/><path d="M11.4 9.0 L11.4 12.0" stroke="#46494B" stroke-width="1.1"/></svg>
<div class="a t" style="left:1100px;top:76.50px;font-size:13px;line-height:20px;color:#BBBBBB;font-weight:normal;letter-spacing:0.299px;">application-prod.properties</div>
<svg class="a" style="left:1269px;top:82px;" width="8" height="8" viewBox="0 0 8 8"><path d="M0.5 0.5 L7.5 7.5 M7.5 0.5 L0.5 7.5" stroke="#62676A" stroke-width="1.2"/></svg>
<svg class="a" style="left:1293px;top:79px;" width="13" height="17" viewBox="0 0 13 17"><path d="M2 1 L12 1 L12 8 L2 8 L2 4 L5 1 Z" fill="#8F9BA5"/><path d="M2 1 L5 1 L2 4 Z" fill="#3C3F41"/><rect x="0" y="9" width="12.5" height="7.5" fill="#4FA148"/><path d="M3.5 10.5 L3.5 15 M8.5 10.5 L8.5 15 M3.5 12.8 L8.5 12.8" stroke="#1e2e1e" stroke-width="1.3"/></svg>
<svg class="a" style="left:1317px;top:87px;" width="6" height="4" viewBox="0 0 6 4"><polygon points="0,0 6,0 3,3.5" fill="#AFB1B3"/></svg>
<svg class="a" style="left:1324px;top:83px;" width="9" height="9" viewBox="0 0 9 9"><g fill="#C8C8C8"><rect x="0" y="0.5" width="8.5" height="1.1"/><rect x="0" y="2.5" width="8.5" height="1.1"/><rect x="0" y="4.5" width="8.5" height="1.1"/><rect x="0" y="6.5" width="8.5" height="1.1"/></g></svg>
<div class="a t" style="left:1334px;top:78.05px;font-size:8.5px;line-height:20px;color:#BBBBBB;font-weight:normal;letter-spacing:0.000px;">5</div>
<div class="a" style="left:427px;top:100px;width:56px;height:358px;background:#313335;"></div>
<div class="a" style="left:482px;top:100px;width:1px;height:358px;background:#555555;"></div>
<div class="a" style="left:483px;top:100px;width:845px;height:358px;background:#2B2B2B;"></div>
<div class="a" style="left:1328px;top:100px;width:1px;height:358px;background:#484848;"></div>
<div class="a" style="left:1329px;top:100px;width:15px;height:358px;background:#2B2B2B;"></div>
<div class="a" style="left:483px;top:100px;width:845px;height:20px;background:#323232;"></div>
<div class="a" style="left:427px;top:100px;width:55px;height:20px;background:#323232;"></div>
<svg class="a" style="left:1331px;top:102px;" width="12" height="13" viewBox="0 0 12 13"><path d="M1 5 L4.5 8.5 L11 1" stroke="#59A869" stroke-width="2.2" fill="none"/><path d="M1 11 L3 9.5 L5 11.5 L7 9.5 L9 11.5 L11 10" stroke="#59A869" stroke-width="1" fill="none"/></svg>
<div class="a" style="left:1335px;top:117px;width:8px;height:289px;background:#4A4C4E;"></div>
<div class="m" style="left:439px;top:100px;color:#A4A3A3">1</div>
<div class="m" style="left:488px;top:100px"><span style="color:#808080;">#\u6570\u636E\u9A71\u52A8</span></div>
<div class="m" style="left:439px;top:120px;color:#606366">2</div>
<div class="m" style="left:488px;top:120px"><span style="color:#808080;">#spring.datasource.driver-class-name=dm.jdbc.driver.DmDriver</span></div>
<div class="m" style="left:439px;top:140px;color:#606366">3</div>
<div class="m" style="left:488px;top:140px"><span style="color:#808080;">#spring.datasource.url=jdbc:dm://192.168.0.105:5236/</span><span style="color:#808080;">JEECMS</span></div>
<div class="m" style="left:439px;top:160px;color:#606366">4</div>
<div class="m" style="left:488px;top:160px"><span style="color:#808080;">#spring.datasource.username=</span><span style="color:#808080;">JEECMS</span></div>
<div class="m" style="left:439px;top:180px;color:#606366">5</div>
<div class="m" style="left:488px;top:180px"><span style="color:#808080;">#spring.datasource.password=123456789</span></div>
<div class="m" style="left:439px;top:200px;color:#606366">6</div>
<div class="m" style="left:488px;top:200px"><span style="color:#808080;">#spring.jpa.properties.hibernate.dialect=org.hibernate.dialect.DmDialect</span></div>
<div class="m" style="left:439px;top:220px;color:#606366">7</div>
<div class="m" style="left:488px;top:220px"></div>
<div class="m" style="left:439px;top:240px;color:#606366">8</div>
<div class="m" style="left:488px;top:240px"><span style="color:#CC7832;">spring.datasource.driver-class-name</span><span style="color:#A9B7C6;">=</span><span style="color:#6897BB;">com.mysql.jdbc.Driver</span></div>
<div class="m" style="left:439px;top:260px;color:#606366">9</div>
<div class="m" style="left:488px;top:260px"><span style="color:#CC7832;">spring.datasource.url</span><span style="color:#A9B7C6;">=</span><span style="color:#6A8759;">jdbc:mysql://10.0.103.146:3306/</span><span style="color:#6A8759;">jeecmsceshi3</span><span style="color:#6A8759;">?useUnicode=true&amp;characterEncoding=UTF-8&amp;useSSL=false</span></div>
<div class="m" style="left:432px;top:280px;color:#606366">10</div>
<div class="m" style="left:488px;top:280px"><span style="color:#CC7832;">spring.datasource.username</span><span style="color:#A9B7C6;">=</span><span style="color:#6A8759;">root</span></div>
<div class="m" style="left:432px;top:300px;color:#606366">11</div>
<div class="m" style="left:488px;top:300px"><span style="color:#CC7832;">spring.datasource.password</span><span style="color:#A9B7C6;">=</span><span style="color:#6A8759;">root</span></div>
<div class="m" style="left:432px;top:320px;color:#606366">12</div>
<div class="m" style="left:488px;top:320px"></div>
<div class="m" style="left:432px;top:340px;color:#606366">13</div>
<div class="m" style="left:488px;top:340px"><span style="color:#808080;">#hibernate\u662F\u5426\u663E\u793A</span><span style="color:#808080;">sql</span><span style="color:#808080;">\u6216\u683C\u5F0F\u5316\u663E\u793A</span></div>
<div class="m" style="left:432px;top:360px;color:#606366">14</div>
<div class="m" style="left:488px;top:360px"><span style="color:#CC7832;">spring.jpa.properties.</span><span style="color:#CC7832;font-style:italic">hibernate.show_sql</span><span style="color:#A9B7C6;">=</span><span style="color:#6A8759;">false</span></div>
<div class="m" style="left:432px;top:380px;color:#606366">15</div>
<div class="m" style="left:488px;top:380px"><span style="color:#CC7832;">spring.jpa.properties.</span><span style="color:#CC7832;font-style:italic">hibernate.format_sql</span><span style="color:#A9B7C6;">=</span><span style="color:#6A8759;">false</span></div>
<div class="m" style="left:432px;top:400px;color:#606366">16</div>
<div class="m" style="left:488px;top:400px"><span style="color:#808080;">#spring.jpa.database-platform=MySQL5</span><span style="color:#808080;">InnoDB</span></div>
<svg class="a" style="left:852px;top:155px;" width="42" height="4" viewBox="0 0 42 4"><polyline points="0,2.5 2,0.5 4,2.5 6,0.5 8,2.5 10,0.5 12,2.5 14,0.5 16,2.5 18,0.5 20,2.5 22,0.5 24,2.5 26,0.5 28,2.5 30,0.5 32,2.5 34,0.5 36,2.5 38,0.5 40,2.5 42,0.5" fill="none" stroke="#629755" stroke-width="1"/></svg>
<svg class="a" style="left:684px;top:175px;" width="42" height="4" viewBox="0 0 42 4"><polyline points="0,2.5 2,0.5 4,2.5 6,0.5 8,2.5 10,0.5 12,2.5 14,0.5 16,2.5 18,0.5 20,2.5 22,0.5 24,2.5 26,0.5 28,2.5 30,0.5 32,2.5 34,0.5 36,2.5 38,0.5 40,2.5 42,0.5" fill="none" stroke="#629755" stroke-width="1"/></svg>
<svg class="a" style="left:859px;top:275px;" width="84" height="4" viewBox="0 0 84 4"><polyline points="0,2.5 2,0.5 4,2.5 6,0.5 8,2.5 10,0.5 12,2.5 14,0.5 16,2.5 18,0.5 20,2.5 22,0.5 24,2.5 26,0.5 28,2.5 30,0.5 32,2.5 34,0.5 36,2.5 38,0.5 40,2.5 42,0.5 44,2.5 46,0.5 48,2.5 50,0.5 52,2.5 54,0.5 56,2.5 58,0.5 60,2.5 62,0.5 64,2.5 66,0.5 68,2.5 70,0.5 72,2.5 74,0.5 76,2.5 78,0.5 80,2.5 82,0.5 84,2.5" fill="none" stroke="#629755" stroke-width="1"/></svg>
<svg class="a" style="left:726px;top:355px;" width="21" height="4" viewBox="0 0 21 4"><polyline points="0,2.5 2,0.5 4,2.5 6,0.5 8,2.5 10,0.5 12,2.5 14,0.5 16,2.5 18,0.5 20,2.5" fill="none" stroke="#629755" stroke-width="1"/></svg>
<svg class="a" style="left:740px;top:415px;" width="42" height="4" viewBox="0 0 42 4"><polyline points="0,2.5 2,0.5 4,2.5 6,0.5 8,2.5 10,0.5 12,2.5 14,0.5 16,2.5 18,0.5 20,2.5 22,0.5 24,2.5 26,0.5 28,2.5 30,0.5 32,2.5 34,0.5 36,2.5 38,0.5 40,2.5 42,0.5" fill="none" stroke="#629755" stroke-width="1"/></svg>
<svg class="a" style="left:495px;top:121px;" width="12" height="16" viewBox="0 0 12 16"><circle cx="6" cy="6" r="5.5" fill="#F0A732"/><path d="M3.5 12 L8.5 12 M3.5 14 L8.5 14" stroke="#DDDDDD" stroke-width="1"/></svg>
<div class="a" style="left:22px;top:458px;width:1322px;height:1px;background:#2B2B2B;"></div>
<div class="a" style="left:1344px;top:73px;width:1px;height:612px;background:#2B2B2B;"></div>
<div class="a" style="left:1345px;top:73px;width:21px;height:612px;background:#3C3F41;"></div>
<svg class="a" style="left:1348px;top:85px" width="14" height="15" viewBox="0 0 17 18"><ellipse cx="10" cy="8" rx="8" ry="4" transform="rotate(-42 10 8)" fill="#7DBB2F"/><path d="M0.5 10.5 L5 7 L7 11 Z" fill="#7DBB2F"/><path d="M6 11 L8 16 L10.5 12 Z" fill="#7DBB2F"/><circle cx="10.5" cy="6" r="1.1" fill="#fff"/><text x="7.5" y="17" font-size="7" font-family="Liberation Sans" font-weight="bold" fill="#fff">JR</text></svg>
<div class="vl" style="left:1348px;top:101px;height:107px;font-size:12px;letter-spacing:-0.245px;color:#BBBBBB">JRebel Setup Guide</div>
<svg class="a" style="left:1349px;top:225px;" width="12" height="13" viewBox="0 0 12 13"><g fill="none" stroke="#AFB1B3" stroke-width="1.6"><ellipse cx="6" cy="2.5" rx="5" ry="1.8"/><path d="M1 2.5 L1 10.5 C1 12.5 11 12.5 11 10.5 L11 2.5"/><path d="M1 6.5 C1 8.5 11 8.5 11 6.5"/></g></svg>
<div class="vl" style="left:1348px;top:242px;height:54px;font-size:12px;letter-spacing:-0.171px;color:#BBBBBB">Database</div>
<svg class="a" style="left:1349px;top:315px;" width="12" height="12" viewBox="0 0 12 12"><circle cx="5.5" cy="5.5" r="5" fill="#AFB1B3"/><path d="M5 9 L8 11 L12 5" stroke="#3C3F41" stroke-width="2.4" fill="none"/><path d="M5 9 L8 11 L12 5" stroke="#AFB1B3" stroke-width="1.2" fill="none"/></svg>
<div class="vl" style="left:1348px;top:330px;height:86px;font-size:12px;letter-spacing:-0.078px;color:#BBBBBB">Bean Validation</div>
<div class="a t" style="left:1347px;top:431.80px;font-size:15px;line-height:20px;color:#AFB1B3;font-weight:bold;letter-spacing:0.000px;font-style:italic">m</div>
<div class="vl" style="left:1348px;top:450px;height:41px;font-size:12px;letter-spacing:0.196px;color:#BBBBBB">Maven</div>
<div class="a" style="left:22px;top:459px;width:1322px;height:26px;background:#3C3F41;"></div>
<div class="a t" style="left:29px;top:462.50px;font-size:13px;line-height:20px;color:#BBBBBB;font-weight:normal;letter-spacing:-0.153px;">Debug:</div>
<svg class="a" style="left:89px;top:464px;" width="18" height="18" viewBox="0 0 18 18"><path d="M2.5 15.5 C0.5 12.5 1 8.5 5 7 C8.5 5.8 12 5.5 14.5 3 C15.8 6 15.5 9.5 13.5 11.5 L9 12.5 C7 13.2 5 14.5 3.5 16 Z" fill="#5DA546"/><polygon points="17.40,12.00 14.40,17.20 8.40,17.20 5.40,12.00 8.40,6.80 14.40,6.80" fill="#3C3F41"/><polygon points="16.40,12.00 13.90,16.33 8.90,16.33 6.40,12.00 8.90,7.67 13.90,7.67" fill="#B4BEC6"/><path d="M10.0 10.7 A2.3 2.3 0 1 0 12.8 10.7" stroke="#46494B" stroke-width="1.1" fill="none"/><path d="M11.4 9.0 L11.4 12.0" stroke="#46494B" stroke-width="1.1"/><circle cx="14.3" cy="14.3" r="2.3" fill="#3fe24a"/></svg>
<div class="a t" style="left:109px;top:462.50px;font-size:13px;line-height:20px;color:#BBBBBB;font-weight:normal;letter-spacing:-0.035px;">CmsFrontApplication</div>
<svg class="a" style="left:236px;top:469px;" width="8" height="8" viewBox="0 0 8 8"><path d="M0.5 0.5 L7.5 7.5 M7.5 0.5 L0.5 7.5" stroke="#62676A" stroke-width="1.2"/></svg>
<svg class="a" style="left:1299px;top:466px;" width="13" height="13" viewBox="0 0 13 13"><g fill="#AFB1B3"><circle cx="6.5" cy="6.5" r="4.6"/><rect x="4.9" y="0" width="3.2" height="13" rx="1.1"/><rect x="4.9" y="0" width="3.2" height="13" rx="1.1" transform="rotate(60 6.5 6.5)"/><rect x="4.9" y="0" width="3.2" height="13" rx="1.1" transform="rotate(-60 6.5 6.5)"/></g><circle cx="6.5" cy="6.5" r="1.9" fill="#3C3F41"/></svg>
<div class="a" style="left:1325px;top:471px;width:12px;height:2px;background:#AFB1B3;"></div>
<div class="a" style="left:22px;top:485px;width:1322px;height:1px;background:#323232;"></div>
<div class="a" style="left:77px;top:483px;width:178px;height:3px;background:#7B8186;"></div>
<div class="a" style="left:22px;top:486px;width:1322px;height:28px;background:#3C3F41;"></div>
<svg class="a" style="left:29px;top:491px;" width="15" height="16" viewBox="0 0 15 16"><path d="M3 12 A5.5 5.5 0 1 1 11 4" stroke="#59A869" stroke-width="2.2" fill="none"/><polygon points="9,0 15,4.5 9,8" fill="#59A869"/><rect x="8" y="9" width="6" height="6" fill="#C8C8C8"/></svg>
<div class="a" style="left:50px;top:486px;width:1px;height:199px;background:#323232;"></div>
<div class="a t" style="left:64px;top:489.50px;font-size:13px;line-height:20px;color:#BBBBBB;font-weight:normal;letter-spacing:-0.512px;">Debugger</div>
<svg class="a" style="left:142px;top:493px;" width="13" height="12" viewBox="0 0 13 12"><rect width="13" height="12" fill="#AFB1B3"/><path d="M4 3 L8 6 L4 9" stroke="#3C3F41" stroke-width="1.6" fill="none"/></svg>
<div class="a t" style="left:161px;top:489.50px;font-size:13px;line-height:20px;color:#BBBBBB;font-weight:normal;letter-spacing:-0.957px;">Console</div>
<svg class="a" style="left:222px;top:491px;" width="14" height="15" viewBox="0 0 14 15"><path d="M2.5 12 L7 3 L11.5 12" stroke="#E0622C" stroke-width="1.6" fill="none"/><circle cx="7" cy="3" r="2.5" fill="#E0622C"/><circle cx="2.5" cy="12" r="2.5" fill="#E0622C"/><circle cx="11.5" cy="12" r="2.5" fill="#E0622C"/></svg>
<div class="a t" style="left:242px;top:489.50px;font-size:13px;line-height:20px;color:#BBBBBB;font-weight:normal;letter-spacing:-0.536px;">Endpoints</div>
<svg class="a" style="left:310px;top:493px;" width="13" height="11" viewBox="0 0 13 11"><g fill="#5A5D5F"><rect y="0" width="13" height="2"/><rect y="4.5" width="13" height="2"/><rect y="9" width="13" height="2"/></g></svg>
<div class="a" style="left:332px;top:490px;width:1px;height:18px;background:#515658;"></div>
<svg class="a" style="left:342px;top:492px;" width="14" height="13" viewBox="0 0 14 13"><path d="M1 5 L5 1 L9 5 L13 5 M10 2 L13 5 L10 8" stroke="#5A5D5F" stroke-width="1.5" fill="none"/><rect x="0" y="11" width="14" height="2" fill="#5A5D5F"/></svg>
<svg class="a" style="left:368px;top:491px;" width="14" height="14" viewBox="0 0 14 14"><path d="M7 0 L7 9 M3 5 L7 9 L11 5" stroke="#5A5D5F" stroke-width="1.6" fill="none"/><rect x="0" y="12" width="14" height="2" fill="#5A5D5F"/></svg>
<svg class="a" style="left:394px;top:491px;" width="14" height="14" viewBox="0 0 14 14"><path d="M7 0 L7 9 M3 5 L7 9 L11 5" stroke="#5A5D5F" stroke-width="1.6" fill="none"/><rect x="0" y="12" width="14" height="2" fill="#5A5D5F"/></svg>
<svg class="a" style="left:420px;top:491px;" width="14" height="14" viewBox="0 0 14 14"><path d="M7 10 L7 1 M3 5 L7 1 L11 5" stroke="#5A5D5F" stroke-width="1.6" fill="none"/><rect x="0" y="12" width="14" height="2" fill="#5A5D5F"/></svg>
<svg class="a" style="left:446px;top:491px;" width="14" height="14" viewBox="0 0 14 14"><path d="M5 5 L13 5 L13 13 L5 13 L5 9" stroke="#5A5D5F" stroke-width="1.6" fill="none"/><path d="M0 0 L6 6 M6 0 L0 6" stroke="#5A5D5F" stroke-width="1.4"/></svg>
<svg class="a" style="left:472px;top:491px;" width="14" height="15" viewBox="0 0 14 15"><path d="M0 1 L7 8 M2 8 L7 8 L7 3" stroke="#5A5D5F" stroke-width="1.6" fill="none"/><path d="M10 6 L10 14 M8.5 6 L11.5 6 M8.5 14 L11.5 14" stroke="#5A5D5F" stroke-width="1"/></svg>
<div class="a" style="left:496px;top:490px;width:1px;height:18px;background:#515658;"></div>
<svg class="a" style="left:506px;top:492px;" width="13" height="13" viewBox="0 0 13 13"><rect x="0.8" y="0.8" width="11.4" height="11.4" fill="none" stroke="#5A5D5F" stroke-width="1.6"/><path d="M0 4.5 L13 4.5 M0 8.5 L13 8.5 M4.5 4 L4.5 13 M8.5 4 L8.5 13" stroke="#5A5D5F" stroke-width="1.2"/></svg>
<svg class="a" style="left:531px;top:492px;" width="13" height="13" viewBox="0 0 13 13"><path d="M0 2 L5 2 M0 6.5 L5 6.5 M0 11 L5 11 M8 1 L13 6 M8 12 L13 7 M7 6.5 L13 6.5" stroke="#5A5D5F" stroke-width="1.6" fill="none"/></svg>
<svg class="a" style="left:1324px;top:493px;" width="13" height="14" viewBox="0 0 13 14"><g fill="#AFB1B3"><rect x="0" y="0" width="7" height="6"/><rect x="8" y="0" width="5" height="6"/><rect x="0" y="7" width="13" height="4"/></g><polygon points="8,12 13,12 10.5,14" fill="#AFB1B3"/></svg>
<div class="a" style="left:22px;top:513px;width:1322px;height:1px;background:#323232;"></div>
<div class="a" style="left:128px;top:512px;width:83px;height:3px;background:#7B8186;"></div>
<div class="a" style="left:22px;top:514px;width:28px;height:171px;background:#3C3F41;"></div>
<div class="a" style="left:26px;top:516px;width:20px;height:1px;background:#515658;"></div>
<svg class="a" style="left:31px;top:527px;" width="13" height="12" viewBox="0 0 13 12"><rect x="0" y="0" width="3" height="12" fill="#5A5D5F"/><polygon points="5,0 13,6 5,12" fill="#5A5D5F"/></svg>
<div class="a" style="left:32px;top:553px;width:3px;height:11px;background:#AFB1B3;"></div>
<div class="a" style="left:37px;top:553px;width:3px;height:11px;background:#AFB1B3;"></div>
<div class="a" style="left:31px;top:580px;width:10px;height:10px;background:#C75450;"></div>
<div class="a" style="left:26px;top:601px;width:20px;height:1px;background:#515658;"></div>
<svg class="a" style="left:30px;top:611px;" width="14" height="14" viewBox="0 0 14 14"><circle cx="9.5" cy="4" r="3.6" fill="#C75450"/><circle cx="5" cy="8.5" r="4.6" fill="#C75450" stroke="#3C3F41" stroke-width="0.8"/></svg>
<svg class="a" style="left:29px;top:637px;" width="14" height="14" viewBox="0 0 14 14"><circle cx="7" cy="7" r="5" fill="#C75450"/><path d="M1 13 L13 1" stroke="#3C3F41" stroke-width="2.6"/><path d="M1 13 L13 1" stroke="#AFB1B3" stroke-width="1.2"/></svg>
<div class="a" style="left:26px;top:660px;width:20px;height:1px;background:#515658;"></div>
<div class="a t" style="left:32px;top:666.88px;font-size:9px;line-height:20px;color:#AFB1B3;font-weight:normal;letter-spacing:0.000px;">&gt;&gt;</div>
<div class="a" style="left:51px;top:514px;width:29px;height:171px;background:#3C3F41;"></div>
<div class="a" style="left:80px;top:514px;width:1px;height:171px;background:#323232;"></div>
<svg class="a" style="left:59px;top:522px;" width="12" height="14" viewBox="0 0 12 14"><path d="M6 13 L6 1.5 M1.5 6 L6 1.5 L10.5 6" stroke="#AFB1B3" stroke-width="1.7" fill="none"/></svg>
<svg class="a" style="left:59px;top:548px;" width="12" height="14" viewBox="0 0 12 14"><path d="M6 0 L6 11.5 M1.5 7 L6 11.5 L10.5 7" stroke="#AFB1B3" stroke-width="1.7" fill="none"/></svg>
<svg class="a" style="left:59px;top:574px;" width="14" height="15" viewBox="0 0 14 15"><path d="M0 1 L12 1" stroke="#AFB1B3" stroke-width="1.6"/><path d="M0 7 L10 7 C13 7 13 12 10 12 L5 12" stroke="#AFB1B3" stroke-width="1.6" fill="none"/><polygon points="6,9.5 3,12 6,14.5" fill="#AFB1B3"/><rect x="0" y="11" width="3" height="2" fill="#AFB1B3"/></svg>
<svg class="a" style="left:59px;top:601px;" width="13" height="12" viewBox="0 0 13 12"><path d="M0 1.5 L3 1.5 M0 5.5 L3 5.5 M8 0 L8 7 M5 4 L8 7 L11 4" stroke="#AFB1B3" stroke-width="1.5" fill="none"/><rect x="0" y="10" width="13" height="2" fill="#AFB1B3"/></svg>
<svg class="a" style="left:58px;top:626px;" width="15" height="14" viewBox="0 0 15 14"><rect x="3" y="0" width="9" height="3" fill="#AFB1B3"/><rect x="0" y="4" width="15" height="6" fill="#AFB1B3"/><rect x="3.5" y="8" width="8" height="5.2" fill="#3C3F41" stroke="#AFB1B3" stroke-width="1.3"/></svg>
<svg class="a" style="left:60px;top:651px;" width="11" height="14" viewBox="0 0 11 14"><rect x="0" y="1.5" width="11" height="1.6" fill="#AFB1B3"/><rect x="3.5" y="0" width="4" height="2" fill="#AFB1B3"/><path d="M1 4 L10 4 L9.2 14 L1.8 14 Z" fill="#AFB1B3"/></svg>
<div class="a" style="left:81px;top:514px;width:1263px;height:171px;background:#2B2B2B;"></div>
<div class="a" style="left:81px;top:514px;width:1262px;height:171px;overflow:hidden">
<div class="a" style="left:11px;top:162px;width:119px;height:9px;background:#515151"></div>
<div class="m" style="left:10px;top:0px;color:#BBBBBB">Hibernate: select coreuserex0_.id as id1_85_0_, coreuserex0_.deleted_flag as deleted_2_85_0_, coreuserex0_.create_time as create_t3_85_0_, coreuserex0_.create_user as create_u4_85</div>
<div class="m" style="left:10px;top:20px;color:#BBBBBB">Hibernate: select resourcess0_.id as id1_77_0_, resourcess0_.deleted_flag as deleted_2_77_0_, resourcess0_.create_time as create_t3_77_0_, resourcess0_.create_user as create_u4_77</div>
<div class="m" style="left:10px;top:40px;color:#BBBBBB">Hibernate: select coreuserex0_.id as id1_85_0_, coreuserex0_.deleted_flag as deleted_2_85_0_, coreuserex0_.create_time as create_t3_85_0_, coreuserex0_.create_user as create_u4_85</div>
<div class="m" style="left:10px;top:60px;color:#BBBBBB">1132-------------------------------------------------</div>
<div class="m" style="left:10px;top:80px;color:#BBBBBB">2019-12-19 14:46:35.462 [http-nio-8080-exec-5] ERROR com.jeecms.common.util.DesUtil - Input length must be multiple of 8 when decrypting with padded cipher</div>
<div class="m" style="left:10px;top:100px;color:#BBBBBB">Hibernate: select permcfgs0_.user_id as user_id15_75_0_, permcfgs0_.id as id1_75_0_, permcfgs0_.id as id1_75_1_, permcfgs0_.deleted_flag as deleted_2_75_1_, permcfgs0_.create_time</div>
<div class="m" style="left:10px;top:120px;color:#BBBBBB">2019-12-19 14:46:35.498 [http-nio-8080-exec-5] ERROR org.hibernate.internal.ExceptionMapperStandardImpl - HHH000346: Error during managed flush [Validation failed for classes [com</div>
<div class="m" style="left:10px;top:140px;color:#BBBBBB">List of constraint violations:[</div>
<div class="m" style="left:10px;top:160px;color:#BBBBBB">    ConstraintViolationImpl{interpolatedMessage='不能为null', propertyPath=password, rootBeanClass=class com.jeecms.auth.domain.CoreUser, messageTemplate='{javax.validation.constraints.NotNull.message}'}</div>
</div>
<div class="a" style="left:1335px;top:515px;width:8px;height:25px;background:rgba(120,120,120,0.45);"></div>
<div class="a" style="left:0px;top:685px;width:1366px;height:22px;background:#3C3F41;"></div>
<div class="a" style="left:0px;top:685px;width:1366px;height:1px;background:#323232;"></div>
<svg class="a" style="left:32px;top:692px;" width="13" height="12" viewBox="0 0 13 12"><path d="M1 11 C1 5 5 1 12 1 C12 7 9 11 3 11 Z" fill="#AFB1B3"/><path d="M1 11 C4 7 7 5 10 3" stroke="#3C3F41" stroke-width="1"/></svg>
<div class="a t" style="left:49px;top:687.50px;font-size:13px;line-height:20px;color:#BBBBBB;font-weight:normal;letter-spacing:-0.597px;">Spring</div>
<svg class="a" style="left:104px;top:692px;" width="12" height="11" viewBox="0 0 12 11"><rect width="12" height="11" fill="#AFB1B3"/><path d="M2 2 L5 4.5 L2 7 M6 8.5 L10 8.5" stroke="#3C3F41" stroke-width="1.3" fill="none"/></svg>
<div class="a t" style="left:120px;top:687.50px;font-size:13px;line-height:20px;color:#BBBBBB;font-weight:normal;letter-spacing:-0.641px;">Terminal</div>
<svg class="a" style="left:188px;top:692px;" width="13" height="13" viewBox="0 0 13 13"><path d="M0 0 L9 0 L9 3 L3 3 L3 10 L0 10 Z" fill="#AFB1B3"/><rect x="3.5" y="4" width="9" height="9" fill="#AFB1B3"/><path d="M5 6 L11 6 M5 8.5 L11 8.5 M5 11 L11 11" stroke="#3C3F41" stroke-width="1"/></svg>
<div class="a t" style="left:204px;top:687.50px;font-size:13px;line-height:20px;color:#BBBBBB;font-weight:normal;letter-spacing:-0.888px;">Java Enterprise</div>
<svg class="a" style="left:302px;top:691px;" width="13" height="13" viewBox="0 0 13 13"><path d="M1 3 L6 0 L9 3 L6 5 Z" fill="#AFB1B3"/><path d="M5 4 L12 12" stroke="#AFB1B3" stroke-width="2.2"/></svg>
<div class="a t" style="left:320px;top:687.50px;font-size:13px;line-height:20px;color:#BBBBBB;font-weight:normal;letter-spacing:-0.382px;">Build</div>
<svg class="a" style="left:369px;top:692px;" width="9" height="11" viewBox="0 0 9 11"><polygon points="0,0 9,5.5 0,11" fill="#AFB1B3"/></svg>
<div class="a t" style="left:383px;top:687.50px;font-size:13px;line-height:20px;color:#BBBBBB;font-weight:normal;letter-spacing:-0.884px;">4: Run</div>
<div class="a" style="left:386px;top:704px;width:7px;height:1px;background:#BBBBBB;"></div>
<div class="a" style="left:426px;top:686px;width:84px;height:21px;background:#2E3032;"></div>
<svg class="a" style="left:437px;top:691px;" width="13" height="13" viewBox="0 0 13 13"><ellipse cx="6" cy="7" rx="3.6" ry="5" fill="#AFB1B3"/><path d="M0 4 L12 4 M0 7.5 L12 7.5 M0 11 L12 11" stroke="#AFB1B3" stroke-width="1.3"/><circle cx="10.5" cy="11" r="2.3" fill="#3fe24a"/></svg>
<div class="a t" style="left:454px;top:687.50px;font-size:13px;line-height:20px;color:#DDDDDD;font-weight:normal;letter-spacing:-0.720px;">5: Debug</div>
<div class="a" style="left:454px;top:704px;width:7px;height:1px;background:#DDDDDD;"></div>
<svg class="a" style="left:526px;top:692px;" width="12" height="11" viewBox="0 0 12 11"><g fill="#AFB1B3"><rect x="0" y="0" width="2" height="2"/><rect x="3.5" y="0" width="8.5" height="2"/><rect x="0" y="4.5" width="2" height="2"/><rect x="3.5" y="4.5" width="8.5" height="2"/><rect x="0" y="9" width="2" height="2"/><rect x="3.5" y="9" width="8.5" height="2"/></g></svg>
<div class="a t" style="left:539px;top:687.50px;font-size:13px;line-height:20px;color:#BBBBBB;font-weight:normal;letter-spacing:-1.077px;">6: TODO</div>
<div class="a" style="left:539px;top:704px;width:7px;height:1px;background:#BBBBBB;"></div>
<div class="a" style="left:0px;top:707px;width:1366px;height:1px;background:#2B2B2B;"></div>
<div class="a" style="left:0px;top:708px;width:1366px;height:20px;background:#3C3F41;"></div>
<svg class="a" style="left:6px;top:711px;" width="14" height="14" viewBox="0 0 14 14"><rect x="3.6" y="0.6" width="9.8" height="9.8" fill="none" stroke="#AFB1B3" stroke-width="1.2"/><path d="M0.6 3 L0.6 13.4 L11 13.4" stroke="#AFB1B3" stroke-width="1.2" fill="none"/></svg>
<div class="a t" style="left:27px;top:707.50px;font-size:13px;line-height:20px;color:#BBBBBB;font-weight:normal;letter-spacing:0.076px;">CmsFrontApplication: Failed to retrieve &#x27;health&#x27; endpoint data (8 minutes ago)</div>
<div class="a t" style="left:1149px;top:707.50px;font-size:13px;line-height:20px;color:#BBBBBB;font-weight:normal;letter-spacing:-0.024px;">1:1</div>
<div class="a t" style="left:1178px;top:707.50px;font-size:13px;line-height:20px;color:#BBBBBB;font-weight:normal;letter-spacing:-1.237px;">CRLF</div>
<div class="a t" style="left:1217px;top:707.50px;font-size:13px;line-height:20px;color:#777777;font-weight:normal;letter-spacing:-0.151px;">GBK</div>
<div class="a t" style="left:1256px;top:707.50px;font-size:13px;line-height:20px;color:#BBBBBB;font-weight:normal;letter-spacing:-0.254px;">4 spaces</div>
<svg class="a" style="left:1318px;top:712px;" width="13" height="13" viewBox="0 0 13 13"><path d="M8 6 L8 3.5 C8 0.5 12.5 0.5 12.5 3.5" stroke="#AFB1B3" stroke-width="1.4" fill="none"/><rect x="1" y="6" width="9" height="7" fill="#AFB1B3"/></svg>
<svg class="a" style="left:1339px;top:711px;" width="14" height="14" viewBox="0 0 14 14"><path d="M2 5 L12 5 L10 1 L4 1 Z" fill="#AFB1B3"/><rect x="0" y="5" width="14" height="1.4" fill="#AFB1B3"/><circle cx="7" cy="9.5" r="3.8" fill="#AFB1B3"/><path d="M2 14 C3 11 11 11 12 14" fill="#AFB1B3"/></svg>
<div class="a" style="left:1182px;top:681px;width:184px;height:22px;background:#FFFFFF;"></div>
<svg class="a" style="left:1146px;top:690px;" width="14" height="14" viewBox="0 0 14 14"><path d="M7 0 A6.5 6.5 0 1 1 1 10 L0 14 L3.5 12 A6.5 6.5 0 0 1 7 0Z" fill="#3D9A42"/><text x="4.5" y="11" font-size="9" font-family="Liberation Sans" fill="#fff">1</text></svg>
<svg class="a" style="left:1159px;top:676px;" width="31" height="30" viewBox="0 0 31 30"><g transform="rotate(-12 15 15)"><rect x="3" y="3" width="24" height="24" rx="4" fill="#F26522"/><path d="M21 9 C18 6 9 7 10 11 C11 14 20 13 20 18 C20 23 11 23 8 20" stroke="#fff" stroke-width="3.6" fill="none"/></g></svg>
<div class="a t" style="left:1194px;top:683.15px;font-size:14px;line-height:20px;color:#1A6FD0;font-weight:bold;letter-spacing:0.000px;">英</div>
<svg class="a" style="left:1217px;top:688px;" width="11" height="12" viewBox="0 0 11 12"><circle cx="2" cy="3" r="1.8" fill="#1A6FD0"/><path d="M8 4 C10 6 9 9 6 11" stroke="#1A6FD0" stroke-width="2" fill="none"/></svg>
<svg class="a" style="left:1236px;top:684px;" width="17" height="17" viewBox="0 0 17 17"><circle cx="8.5" cy="8.5" r="7.3" fill="none" stroke="#1A6FD0" stroke-width="1.6"/><circle cx="6" cy="6.5" r="1.1" fill="#1A6FD0"/><circle cx="11" cy="6.5" r="1.1" fill="#1A6FD0"/><path d="M4.5 9.5 C6 13 11 13 12.5 9.5" stroke="#1A6FD0" stroke-width="1.5" fill="none"/></svg>
<svg class="a" style="left:1260px;top:683px;" width="14" height="19" viewBox="0 0 14 19"><rect x="4" y="0" width="6" height="11" rx="3" fill="#1A6FD0"/><path d="M1.5 7 C1.5 14 12.5 14 12.5 7 M7 13 L7 17 M3.5 17.5 L10.5 17.5" stroke="#1A6FD0" stroke-width="1.6" fill="none"/></svg>
<svg class="a" style="left:1281px;top:686px;" width="17" height="13" viewBox="0 0 17 13"><rect x="0.8" y="0.8" width="15.4" height="11.4" rx="1.5" fill="none" stroke="#1A6FD0" stroke-width="1.6"/><g fill="#1A6FD0"><rect x="3" y="3" width="2" height="2"/><rect x="6" y="3" width="2" height="2"/><rect x="9" y="3" width="2" height="2"/><rect x="12" y="3" width="2" height="2"/><rect x="3" y="6" width="2" height="2"/><rect x="6" y="6" width="2" height="2"/><rect x="9" y="6" width="2" height="2"/><rect x="12" y="6" width="2" height="2"/><rect x="4" y="9" width="9" height="1.6"/></g></svg>
<svg class="a" style="left:1304px;top:684px;" width="18" height="18" viewBox="0 0 18 18"><circle cx="7" cy="4.5" r="3.5" fill="#C5CDD6"/><path d="M1 14 C1 8 13 8 13 14 Z" fill="#C5CDD6"/><text x="8" y="17" font-size="7" font-family="Liberation Sans" font-weight="bold" fill="#9aa6b2">19</text></svg>
<svg class="a" style="left:1326px;top:686px;" width="15" height="14" viewBox="0 0 15 14"><path d="M0 3 L4.5 0 L10.5 0 L15 3 L13 6.5 L11.5 5.5 L11.5 14 L3.5 14 L3.5 5.5 L2 6.5 Z" fill="#1A6FD0"/></svg>
<svg class="a" style="left:1348px;top:686px;" width="14" height="14" viewBox="0 0 14 14"><g fill="#1A6FD0"><rect x="0" y="0" width="6" height="6"/><rect x="8" y="1" width="5" height="5" fill="none" stroke="#1A6FD0" stroke-width="1.4"/><rect x="0" y="8" width="6" height="6"/><rect x="8" y="8" width="6" height="6"/></g></svg>
<div class="a" style="left:0px;top:728px;width:1366px;height:8px;background:linear-gradient(90deg,#8a9fb7 0px,#93a9c2 55px,#a6bfdb 490px,#aac3de 1000px,#8b9eb5 1090px,#8296ad 1366px);"></div>
<div class="a" style="left:0px;top:728px;width:1366px;height:1px;background:#2f3338;"></div>
<svg class="a" style="left:10px;top:729px;" width="34" height="7" viewBox="0 0 34 7"><ellipse cx="17" cy="15" rx="15" ry="15" fill="#b9cfe0" stroke="#1f4f80" stroke-width="1.6"/></svg>
<div class="a" style="left:60px;top:729px;width:58px;height:7px;background:linear-gradient(#faf5e4,#ddd6c0);border:1px solid #d9b55c;border-radius:3px 3px 0 0"></div>
<svg class="a" style="left:78px;top:732px;" width="22" height="4" viewBox="0 0 22 4"><ellipse cx="11" cy="10" rx="9" ry="9" fill="#e0443a"/></svg>
<div class="a" style="left:122px;top:729px;width:58px;height:7px;background:linear-gradient(#eef3f9,#d3dfeb);border:1px solid #7a8ca3;border-bottom:none;border-radius:3px 3px 0 0"></div>
<div class="a" style="left:184px;top:729px;width:58px;height:7px;background:linear-gradient(#eef3f9,#d3dfeb);border:1px solid #7a8ca3;border-bottom:none;border-radius:3px 3px 0 0"></div>
<div class="a" style="left:246px;top:729px;width:58px;height:7px;background:linear-gradient(#eef3f9,#d3dfeb);border:1px solid #7a8ca3;border-bottom:none;border-radius:3px 3px 0 0"></div>
<div class="a" style="left:308px;top:729px;width:58px;height:7px;background:linear-gradient(#eef3f9,#d3dfeb);border:1px solid #7a8ca3;border-bottom:none;border-radius:3px 3px 0 0"></div>
<div class="a" style="left:370px;top:729px;width:58px;height:7px;background:linear-gradient(#eef3f9,#d3dfeb);border:1px solid #7a8ca3;border-bottom:none;border-radius:3px 3px 0 0"></div>
<div class="a" style="left:432px;top:729px;width:58px;height:7px;background:linear-gradient(#eef3f9,#d3dfeb);border:1px solid #7a8ca3;border-bottom:none;border-radius:3px 3px 0 0"></div>
<svg class="a" style="left:138px;top:730px;" width="24" height="6" viewBox="0 0 24 6"><path d="M0 6 L3 1 L10 0 L12 6Z" fill="#e0306a"/><path d="M12 6 L17 0 L23 6Z" fill="#3f55d0"/></svg>
<div class="a" style="left:199px;top:734px;width:15px;height:2px;background:#cdb06e;"></div>
<svg class="a" style="left:266px;top:731px;" width="18" height="5" viewBox="0 0 18 5"><ellipse cx="9" cy="9" rx="8.5" ry="8.5" fill="#ea6a26"/></svg>
<div class="a" style="left:330px;top:733px;width:20px;height:3px;background:#9ba89a;"></div>
<div class="a" style="left:386px;top:734px;width:10px;height:2px;background:#e8c040;"></div>
<div class="a" style="left:445px;top:730px;width:32px;height:6px;background:#e21f1f;border-radius:6px 6px 0 0"></div>
<div class="a" style="left:1352px;top:729px;width:14px;height:7px;background:linear-gradient(#d0dae5,#a9b8c8);border-left:1px solid #5c6c7e;border-top:1px solid #5c6c7e"></div>
</body></html>
